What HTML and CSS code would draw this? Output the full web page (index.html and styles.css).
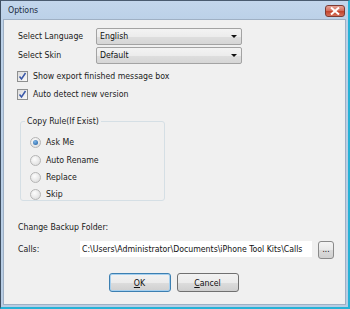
FILE: index.html
```html
<!DOCTYPE html>
<html lang="en">
<head>
  <meta charset="UTF-8">
  <title>Options</title>
  <link rel="stylesheet" href="styles.css">
</head>
<body>
  <div class="window">
    <div class="titlebar">
      <span class="title">Options</span>
      <button class="close" type="button" aria-label="Close">
        <svg width="10" height="8" viewBox="0 0 10 8"><path d="M1 0.5 L9 7.5 M9 0.5 L1 7.5" stroke="#fff" stroke-width="2"/></svg>
      </button>
    </div>
    <div class="client">
      <div class="row">
        <label class="label">Select Language</label>
        <div class="combo"><span>English</span><i class="arrow"></i></div>
      </div>
      <div class="row">
        <label class="label">Select Skin</label>
        <div class="combo"><span>Default</span><i class="arrow"></i></div>
      </div>

      <div class="check first">
        <span class="box"><svg width="9" height="9" viewBox="0 0 9 9"><path d="M1.5 4.5 L3.5 7 L7.5 1" fill="none" stroke="#3a58a8" stroke-width="1.5"/></svg></span>
        Show export finished message box
      </div>
      <div class="check">
        <span class="box"><svg width="9" height="9" viewBox="0 0 9 9"><path d="M1.5 4.5 L3.5 7 L7.5 1" fill="none" stroke="#3a58a8" stroke-width="1.5"/></svg></span>
        Auto detect new version
      </div>

      <fieldset class="group">
        <legend>Copy Rule(If Exist)</legend>
        <div class="radio"><span class="dot on"></span>Ask Me</div>
        <div class="radio"><span class="dot"></span>Auto Rename</div>
        <div class="radio"><span class="dot"></span>Replace</div>
        <div class="radio"><span class="dot"></span>Skip</div>
      </fieldset>

      <div class="backup">Change Backup Folder:</div>
      <div class="path-row">
        <label class="label short">Calls:</label>
        <div class="path">C:\Users\Administrator\Documents\iPhone Tool Kits\Calls</div>
        <button class="browse" type="button">...</button>
      </div>

      <div class="actions">
        <button class="btn default" type="button"><u>O</u>K</button>
        <button class="btn" type="button"><u>C</u>ancel</button>
      </div>
    </div>
  </div>
</body>
</html>
```

FILE: styles.css
```css
/* Janela */
body {
  margin: 0;
  padding: 0;
  font-family: "DejaVu Sans Condensed", "Liberation Sans", sans-serif;
  font-size: 8.7px;
  line-height: 13px;
  color: #1a1a1a;
}
.window {
  width: 350px;
  height: 309px;
  box-sizing: border-box;
  border-top: 1px solid #4a5b70;
  border-left: 1px solid #3e4e60;
  border-right: 2px solid #27b2d6;
  border-bottom: 2px solid #27b2d6;
  background: linear-gradient(#c3d6ec, #bcd1e8 18px, #b8cde4);
  padding: 0 2px 2px 2px;
  display: flex;
  flex-direction: column;
}
/* Barra de titulo */
.titlebar {
  height: 18px;
  display: flex;
  align-items: center;
  justify-content: space-between;
  padding: 0 1px 0 5px;
}
.title {
  color: #1b2b40;
}
.close {
  width: 20px;
  height: 12px;
  margin-top: 1px;
  padding: 0;
  border: 1px solid #7b3b34;
  border-radius: 3px;
  background: linear-gradient(#e6a397, #d26a58 50%, #c2412a 51%, #d4705a);
  display: flex;
  align-items: center;
  justify-content: center;
}
/* Area cliente */
.client {
  flex: 1;
  background: #f0f0f0;
  border: 1px solid #9fb0c4;
  padding: 8px 0 0 14px;
}
.row {
  display: flex;
  align-items: center;
  height: 17px;
  margin-bottom: 2px;
}
.label {
  width: 78px;
  white-space: nowrap;
}
.combo {
  width: 146px;
  height: 17px;
  box-sizing: border-box;
  border: 1px solid #a3a3a3;
  border-radius: 2px;
  background: linear-gradient(#f3f3f3, #ececec 50%, #dedede 51%, #d6d6d6);
  display: flex;
  align-items: center;
  justify-content: space-between;
  padding: 0 4px 0 3px;
  color: #111;
}
.arrow {
  width: 0;
  height: 0;
  border-left: 3px solid transparent;
  border-right: 3px solid transparent;
  border-top: 3px solid #111;
}
/* Caixas de selecao */
.check {
  display: flex;
  align-items: center;
  height: 13px;
  margin-left: -1px;
  margin-bottom: 5px;
}
.check.first {
  margin-top: 6px;
}
.box {
  width: 9px;
  height: 9px;
  border: 1px solid #8e8f8f;
  background: linear-gradient(135deg, #dcdcdc, #fafafa);
  display: flex;
  align-items: center;
  justify-content: center;
  margin-right: 5px;
}
/* Grupo de opcoes */
.group {
  width: 145px;
  height: 86px;
  box-sizing: border-box;
  margin: 14px 0 0 2px;
  padding: 6px 0 0 9px;
  border: 1px solid #d5dfe5;
  border-radius: 3px;
}
.group legend {
  padding: 0 2px;
  margin-left: -5px;
}
.radio {
  display: flex;
  align-items: center;
  height: 17.4px;
}
.dot {
  width: 9px;
  height: 9px;
  border-radius: 50%;
  border: 1px solid #b5b5b5;
  background: radial-gradient(circle at 40% 35%, #fdfdfd, #d8d8d8);
  margin-right: 5px;
  position: relative;
}
.dot.on::after {
  content: "";
  position: absolute;
  left: 2px;
  top: 2px;
  width: 5px;
  height: 5px;
  border-radius: 50%;
  background: radial-gradient(circle at 40% 35%, #7fb6e8, #1a5a9c);
}
/* Pasta de backup */
.backup {
  margin-top: 20px;
}
.path-row {
  display: flex;
  align-items: flex-start;
  margin-top: 7px;
  height: 18px;
}
.label.short {
  width: 62px;
  line-height: 16px;
}
.path {
  width: 230px;
  height: 16px;
  line-height: 16px;
  background: #fff;
  padding-left: 2px;
  white-space: nowrap;
  overflow: hidden;
  color: #111;
}
.browse {
  width: 16px;
  height: 18px;
  margin-left: 6px;
  padding: 0;
  border: 1px solid #8a8a8a;
  border-radius: 3px;
  background: linear-gradient(#f4f4f4, #e8e8e8 50%, #dadada 51%, #d0d0d0);
  font-size: 8px;
  line-height: 12px;
  font-family: inherit;
}
/* Botoes */
.actions {
  display: flex;
  justify-content: center;
  gap: 6px;
  margin-top: 14px;
  padding-right: 16px;
}
.btn {
  width: 62px;
  height: 19px;
  padding: 0;
  border: 1px solid #707070;
  border-radius: 3px;
  background: linear-gradient(#f2f2f2, #ebebeb 50%, #dddddd 51%, #cfcfcf);
  font-family: inherit;
  font-size: 8.7px;
  color: #111;
}
.btn.default {
  border-color: #3c7fb1;
  box-shadow: inset 0 0 0 1px #a6d0ef;
}
```
